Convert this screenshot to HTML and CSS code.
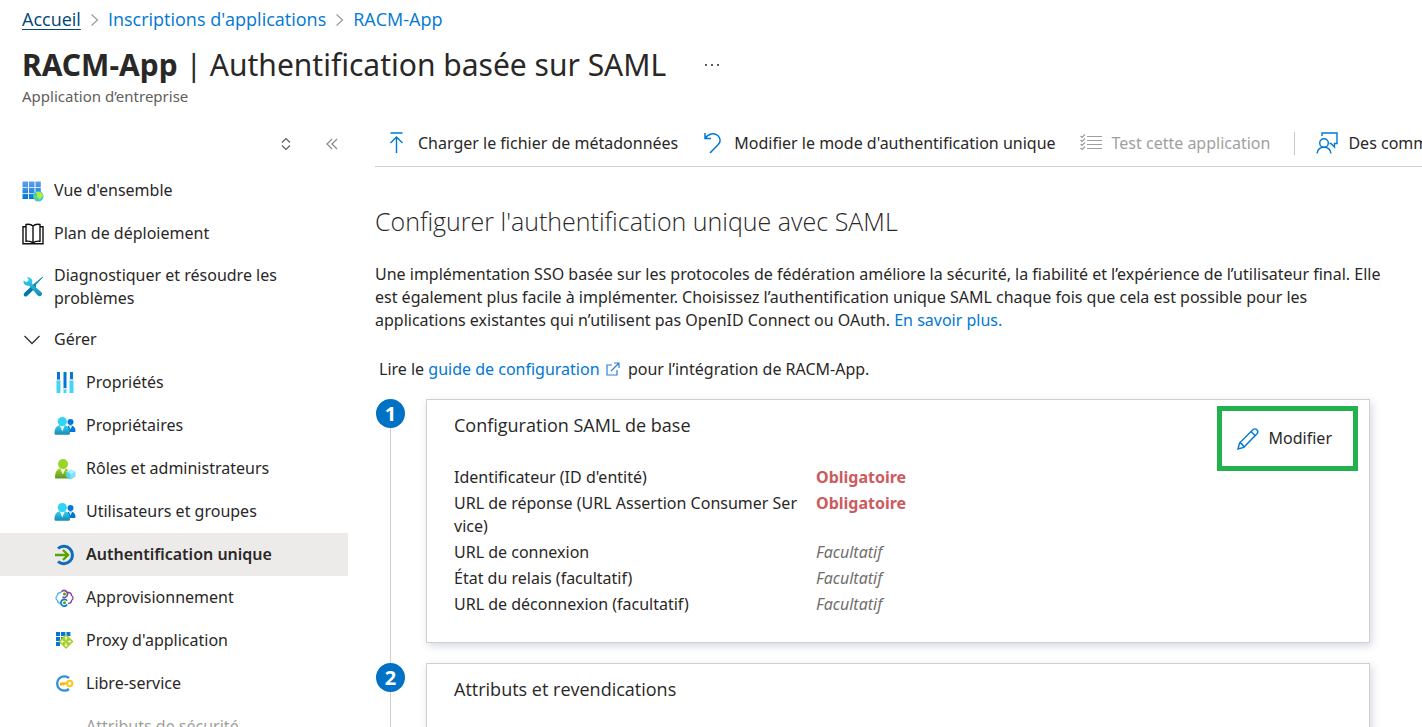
FILE: index.html
```html
<!DOCTYPE html>
<html lang="fr">
<head>
  <meta charset="UTF-8" />
  <meta name="viewport" content="width=device-width, initial-scale=1.0"/>
  <title>RACM-App | Authentification basée sur SAML</title>
  <link rel="stylesheet" href="styles.css">
</head>
<body>

  <!-- Shared gradients and the group icon -->
  <svg class="defs" aria-hidden="true">
    <defs>
      <linearGradient id="blue" x1="0" y1="0" x2="0" y2="1"><stop offset="0" stop-color="#5ea0ef"/><stop offset="1" stop-color="#0078d4"/></linearGradient>
      <linearGradient id="cyan" x1="0" y1="0" x2="0" y2="1"><stop offset="0" stop-color="#32d4f5"/><stop offset="1" stop-color="#198ab3"/></linearGradient>
      <linearGradient id="green" x1="0" y1="0" x2="0" y2="1"><stop offset="0" stop-color="#a4dc28"/><stop offset="1" stop-color="#5e9624"/></linearGradient>
      <symbol id="people" viewBox="0 0 22 22">
        <circle cx="16.5" cy="7" r="3" fill="#0078d4"/>
        <path d="M12 17c0-4 1-6.500 4.500-6.500 3.500 0 5 2.500 5 5.500 0 .6-.4 1-1 1z" fill="#0078d4"/>
        <path d="M14.800 10.800h3.400l-1.700 3.700z" fill="#d5ecfb"/>
        <path d="M.500 17.500C.700 12.500 3 10 8.200 10s7.500 2.500 7.800 8.500c0 .8-.5 1.200-1.200 1.200H1.500c-.8 0-1.100-.7-1-2.200z" fill="url(#cyan)"/>
        <path d="M5.800 10.500h5l-2.500 6z" fill="#e2f8fd"/>
        <circle cx="8.300" cy="6.500" r="4.600" fill="#32d4f5"/>
      </symbol>
    </defs>
  </svg>

  <!-- Header -->
  <header class="header">
    <nav class="breadcrumb" aria-label="Fil d'Ariane">
      <a class="current" href="#">Accueil</a>
      <svg width="9" height="14" viewBox="0 0 9 14"><path d="M1.500 1.500 7.500 7l-6 5.500" fill="none" stroke="#a19f9d" stroke-width="1.300"/></svg>
      <a href="#">Inscriptions d'applications</a>
      <svg width="9" height="14" viewBox="0 0 9 14"><path d="M1.500 1.500 7.500 7l-6 5.500" fill="none" stroke="#a19f9d" stroke-width="1.300"/></svg>
      <a href="#">RACM-App</a>
    </nav>
    <div class="title-row">
      <h1><strong>RACM-App</strong> | Authentification basée sur SAML</h1>
      <button class="more" aria-label="Plus"><svg width="16" height="4" viewBox="0 0 16 4"><path d="M1 1h2v2H1zM7 1h2v2H7zM13 1h2v2h-2z" fill="#605e5c"/></svg></button>
    </div>
    <p class="subtitle">Application d’entreprise</p>
  </header>

  <div class="layout">

    <!-- Sidebar -->
    <aside class="sidebar">
      <div class="sidebar-tools">
        <button aria-label="Tout développer"><svg width="10" height="14" viewBox="0 0 10 14"><path d="M1 5.500 5 1.500l4 4M1 8.500l4 4 4-4" fill="none" stroke="#605e5c" stroke-width="1.200"/></svg></button>
        <button aria-label="Réduire"><svg width="12" height="12" viewBox="0 0 12 12"><path d="M6 1 1 6l5 5M11 1 6 6l5 5" fill="none" stroke="#8a8886" stroke-width="1.200"/></svg></button>
      </div>
      <ul class="menu">
        <li><a href="#">
          <svg class="icon" viewBox="0 0 22 22">
            <path d="M.500 1.500h5.500V7H.500zM7 1.500h5.500V7H7zM13.500 1.500h5.300V7h-5.300zM.500 7.700h5.500v5.300H.500zM7 7.700h5.500v5.300H7zM13.500 7.700h5.300v5.300h-5.300zM.500 13.700h5.500V19H.500zM7 13.700h5.500V19H7z" fill="url(#blue)"/>
            <circle cx="16.300" cy="16.300" r="5.200" fill="#32c8ea"/>
            <path d="M14 12.200c3-1.500 6.800.5 7.100 3.600-.3 1.800-2 1.300-2.400 2.500-.5 1.500-1.700 1.700-2 .3-.3-1-1.800-.8-2-2.200-.2-1 .8-1.400.3-2.200-.4-.6-1-.8-1-2z" fill="#b4ec36"/>
            <path d="M12.500 13.500c.3 3.500 1.500 5.500 4.500 7.500-3.700 0-6.500-4-4.500-7.500z" fill="#86d633"/>
          </svg>
          Vue d'ensemble</a></li>
        <li><a href="#">
          <svg class="icon" viewBox="0 0 22 22" fill="none" stroke="#111" stroke-width="1.400">
            <path d="M11 20V3C9.500 1.500 6.500 1 4 1.500v16.700c2.500-.3 5.500.2 7 1.800 1.500-1.600 4.500-2.100 7-1.800V1.500C15.500 1 12.500 1.500 11 3"/>
            <path d="M4 3.800H1v17h20v-17h-3" />
          </svg>
          Plan de déploiement</a></li>
        <li class="two-lines"><a href="#">
          <svg class="icon" viewBox="0 0 22 22">
            <path d="M20.800 1 12.500 10l-1.300-1.300z" fill="#198ab3" stroke="#198ab3" stroke-width=".8"/>
            <path d="m12 10.500-8.300 8" stroke="#0078a8" stroke-width="4" stroke-linecap="round"/>
            <path d="M7.500 1.500 4.800 1.200l2 2.800-2.300 2.300L1.500 4.500c-.6 3.500 2.500 6 5.500 5l8.500 9.700c2 2.500 6 0 4.200-2.700L10 7.800c1-3-.2-5.500-2.500-6.300z" fill="url(#cyan)"/>
          </svg>
          <span>Diagnostiquer et résoudre les problèmes</span></a></li>
        <li>
          <button class="group" aria-expanded="true">
            <svg class="icon" viewBox="0 0 22 22"><path d="m2.500 7 7.500 7.500L17.500 7" fill="none" stroke="#323130" stroke-width="1.300"/></svg>
            Gérer</button>
          <ul class="submenu">
            <li><a href="#">
              <svg class="icon" viewBox="0 0 22 22">
                <path d="M3 0h3v9H3zM9.500 0h3v16h-3zM16 0h3v8h-3z" fill="#0078d4"/>
                <path d="M2.500 9h4v12h-4zM9.500 18h3v3h-3zM15.500 8.500h4V21h-4z" fill="#42d5f5"/>
                <path d="M2.500 7.500h4V9h-4zM9 16.500h4V18H9zM15.500 7h4v1.500h-4z" fill="#c9d2da"/>
              </svg>
              Propriétés</a></li>
            <li><a href="#"><svg class="icon"><use href="#people"/></svg> Propriétaires</a></li>
            <li><a href="#">
              <svg class="icon" viewBox="0 0 22 22">
                <path d="M1 19C1.200 13 3.500 10 8.800 10c4.800 0 7 3 7.500 9 0 1-.5 1.500-1.200 1.500H2.200C1.400 20.500 1 20 1 19z" fill="url(#green)"/>
                <path d="M6.200 10.500h5.400l-2.700 6z" fill="#f3fbe3"/>
                <circle cx="9" cy="6" r="5" fill="#9bd426"/>
                <path d="m16.800 11.300 4.700 2.200-4.700 2.500-4.700-2.500z" fill="#a8effc"/>
                <path d="m12.100 13.500 4.700 2.500v5.500l-4.700-2.700z" fill="#50d8f2"/>
                <path d="m21.500 13.500-4.700 2.500v5.500l4.700-2.700z" fill="#7be3f7"/>
              </svg>
              Rôles et administrateurs</a></li>
            <li><a href="#"><svg class="icon"><use href="#people"/></svg> Utilisateurs et groupes</a></li>
            <li><a class="selected" href="#" aria-current="page">
              <svg class="icon" viewBox="0 0 22 22" fill="none">
                <path d="M4 4.500A8.700 8.700 0 1 1 4 17.500" stroke="#0f6cbd" stroke-width="3"/>
                <path d="M1 11h12.500M9 6l5 5-5 5" stroke="#57a300" stroke-width="2.400"/>
              </svg>
              Authentification unique</a></li>
            <li><a href="#">
              <svg class="icon" viewBox="0 0 22 22" fill="none" stroke-width="1.300">
                <path d="M7.500 5.500H6A3 3 0 0 0 3.500 8.500c-2 1.200-2 3.800 0 5 0 1.700 1.200 2.800 2.800 2.800h.7" stroke="#59b4d9"/>
                <path d="M13.800 5.500H15A3 3 0 0 1 17.500 8.500c2 1.200 2 3.800 0 5 0 1.700-1.200 2.800-2.800 2.800H14" stroke="#804998"/>
                <path d="M7.500 4.800a3.400 3.400 0 1 1 1 5.200" stroke="#804998" stroke-width="1.600"/>
                <path d="M13 13.700a3.400 3.400 0 1 0 .2 3.800" stroke="#0078d4" stroke-width="1.600"/>
                <circle cx="10.500" cy="7" r="1.500" fill="#57a300"/>
                <circle cx="10.500" cy="15.700" r="1.500" fill="#57a300"/>
              </svg>
              Approvisionnement</a></li>
            <li><a href="#">
              <svg class="icon" viewBox="0 0 22 22">
                <path d="M2 2h4v4H2zM7 2h4.400v4H7zM12.400 2h4v4h-4zM2 7h4v4H2zM7 7h4.400v4H7zM2 12h4v4H2z" fill="#0078d4"/>
                <path d="m12 4 7.500 7.500L12 19l-7.500-7.500z" fill="#a5ce2a"/>
                <path d="M12 7v9M7.500 11.500h9" stroke="#f4fadd" stroke-width="1"/>
                <circle cx="12" cy="11.500" r="1.600" fill="#a5ce2a"/>
                <path d="m12 6-1.800 2.300h3.600zM12 17l-1.800-2.300h3.600zM6.500 11.500l2.300-1.800v3.600zM17.500 11.500l-2.300-1.800v3.600z" fill="#f4fadd"/>
              </svg>
              Proxy d'application</a></li>
            <li><a href="#">
              <svg class="icon" viewBox="0 0 22 22" fill="none">
                <path d="M15 5A7.200 7.200 0 1 0 15 16" stroke="#2f8fd8" stroke-width="2.300"/>
                <path d="M14 10.500H6M7 10.500v2M9.500 10.500v2" stroke="#f8b400" stroke-width="2"/>
                <circle cx="15.700" cy="10.500" r="2.700" stroke="#fcc61a" stroke-width="2"/>
              </svg>
              Libre-service</a></li>
            <li><a class="disabled" href="#"><span class="icon"></span> Attributs de sécurité</a></li>
          </ul>
        </li>
      </ul>
    </aside>

    <!-- Main content -->
    <main class="main">
      <div class="toolbar">
        <button>
          <svg class="icon" viewBox="0 0 22 22" fill="none" stroke="#0078d4" stroke-width="1.400"><path d="M4.500 1h12M10.500 21V5M4.500 11l6-6 6 6"/></svg>
          Charger le fichier de métadonnées</button>
        <button>
          <svg class="icon" viewBox="0 0 22 22" fill="none" stroke="#0078d4" stroke-width="1.500"><path d="M3 1v5.500h6M3.200 6.300C6 1.500 12 .3 15.800 3.500c3 2.700 3 6.500.5 9L8 21"/></svg>
          Modifier le mode d'authentification unique</button>
        <button disabled>
          <svg class="icon" viewBox="0 0 22 22" fill="none" stroke="#a19f9d" stroke-width="1.200"><path d="M7 4.500h15M7 8.500h15M7 12.500h15M7 16.500h15M.500 4 2 5.500l3-3M.500 8 2 9.500l3-3M.500 12 2 13.500l3-3M.500 16 2 17.500l3-3"/></svg>
          Test cette application</button>
        <button class="feedback">
          <svg class="icon" viewBox="0 0 22 22" fill="none" stroke="#0078d4" stroke-width="1.400"><circle cx="8" cy="11" r="4.300"/><path d="M1 21.500c.5-4 3.500-6.200 7-6.200s6.500 2.200 7 6.200M6 4V1h15v10.500h-2.500V15L15 11.500h-1.500"/></svg>
          Des commentaires ?</button>
      </div>

      <div class="content">
        <h2>Configurer l'authentification unique avec SAML</h2>
        <p class="intro">Une implémentation SSO basée sur les protocoles de fédération améliore la sécurité, la fiabilité et l’expérience de l’utilisateur final. Elle est également plus facile à implémenter. Choisissez l’authentification unique SAML chaque fois que cela est possible pour les applications existantes qui n’utilisent pas OpenID Connect ou OAuth. <a href="#">En savoir plus.</a></p>
        <p class="guide">Lire le <a href="#">guide de configuration <svg width="14" height="14" viewBox="0 0 14 14" fill="none" stroke="#2f7fd8" stroke-width="1.200"><path d="M6 3H1v10h10V8M8 1h5v5M13 1 5 9"/></svg></a> pour l’intégration de RACM-App.</p>

        <ol class="steps">
          <li class="step">
            <div class="rail"><span class="number">1</span></div>
            <section class="card">
              <div class="card-header">
                <h3>Configuration SAML de base</h3>
                <button class="edit">
                  <svg class="icon" viewBox="0 0 22 22" fill="none" stroke="#0078d4" stroke-width="1.400"><path d="m1 21 1.500-6L15.800 1.800c3-2.500 6.500 1.200 4.200 4L6.800 19.300zM14 3.500l4.500 4.500M2.500 15c2 .3 3.800 2 4.300 4.300"/></svg>
                  Modifier</button>
              </div>
              <dl class="fields">
                <dt>Identificateur (ID d'entité)</dt><dd class="required">Obligatoire</dd>
                <dt>URL de réponse (URL Assertion Consumer Service)</dt><dd class="required">Obligatoire</dd>
                <dt>URL de connexion</dt><dd>Facultatif</dd>
                <dt>État du relais (facultatif)</dt><dd>Facultatif</dd>
                <dt>URL de déconnexion (facultatif)</dt><dd>Facultatif</dd>
              </dl>
            </section>
          </li>
          <li class="step">
            <div class="rail"><span class="number">2</span></div>
            <section class="card">
              <div class="card-header">
                <h3>Attributs et revendications</h3>
              </div>
            </section>
          </li>
        </ol>
      </div>
    </main>
  </div>

</body>
</html>
```
FILE: styles.css
```css
* {
  box-sizing: border-box;
}

body {
  margin: 0;
  height: 100vh;
  overflow: hidden;
  display: flex;
  flex-direction: column;
  background: #fff;
  color: #292827;
  font-family: 'Segoe UI', 'Noto Sans', sans-serif;
  font-size: 16px;
  line-height: 23px;
}

h1, h2, h3, p, ul, ol, dl, dd {
  margin: 0;
  padding: 0;
}

ul, ol {
  list-style: none;
}

a {
  color: #0078d4;
  text-decoration: none;
}

button {
  display: flex;
  align-items: center;
  padding: 0;
  border: none;
  background: none;
  color: inherit;
  font: inherit;
  white-space: nowrap;
  cursor: pointer;
}

.defs {
  position: absolute;
  width: 0;
  height: 0;
}

.icon {
  flex: none;
  width: 22px;
  height: 22px;
}

/* Header */
.header {
  padding: 8px 22px 0;
}

.breadcrumb {
  display: flex;
  align-items: center;
  gap: 9px;
  font-family: 'Segoe UI', 'Open Sans', sans-serif;
  font-size: 18px;
}

.breadcrumb .current {
  color: #004578;
  text-decoration: underline;
  text-underline-offset: 3px;
}

.title-row {
  display: flex;
  align-items: center;
  gap: 38px;
  margin-top: 12px;
}

h1 {
  font-size: 30px;
  line-height: 44px;
  font-weight: 400;
}

h1 strong {
  font-weight: 700;
}

.subtitle {
  color: #605e5c;
  font-size: 15px;
  line-height: 19px;
}

/* Layout */
.layout {
  display: flex;
  flex: 1;
  min-height: 0;
}

.sidebar {
  flex: none;
  width: 348px;
  margin-right: 27px;
  overflow: hidden;
}

.sidebar-tools {
  display: flex;
  justify-content: flex-end;
  align-items: center;
  gap: 35px;
  height: 63px;
  padding: 12px 10px 0 0;
}

.menu a,
.group {
  display: flex;
  align-items: center;
  gap: 10px;
  width: 100%;
  height: 43px;
  padding: 0 22px;
  color: #292827;
}

.menu .two-lines a {
  height: 63px;
}

.submenu a {
  padding-left: 54px;
}

.menu .selected {
  background: #edebe9;
  font-weight: 600;
}

.menu .disabled {
  color: #a19f9d;
}

/* Toolbar */
.main {
  flex: 1;
  min-width: 0;
}

.toolbar {
  display: flex;
  align-items: center;
  gap: 24px;
  height: 61px;
  padding: 14px 0 0 11px;
  border-bottom: 1px solid #d2d0ce;
  overflow: hidden;
}

.toolbar button {
  flex: none;
  gap: 10px;
}

.toolbar button:disabled {
  color: #a19f9d;
}

.toolbar .feedback {
  padding-left: 21px;
  border-left: 1px solid #c8c6c4;
}

/* Content */
.content {
  padding-right: 20px;
}

h2 {
  margin-top: 38px;
  font-family: 'Segoe UI', 'Open Sans', sans-serif;
  font-size: 25px;
  line-height: 32px;
  font-weight: 300;
}

.intro {
  margin-top: 26px;
}

.guide {
  margin: 26px 4px 18px;
}

.guide svg {
  margin: 0 4px -1px 2px;
}

/* Steps */
.steps {
  margin-right: 32px;
}

.step {
  display: flex;
  gap: 21px;
}

.rail {
  display: flex;
  flex-direction: column;
  align-items: center;
  margin-left: 1px;
}

.rail::after {
  content: "";
  flex: 1;
  width: 1px;
  background: #d2d0ce;
}

.number {
  width: 29px;
  height: 29px;
  border-radius: 50%;
  background: #0072c6;
  color: #fff;
  font-size: 20px;
  font-weight: 700;
  line-height: 29px;
  text-align: center;
}

.card {
  flex: 1;
  min-height: 244px;
  margin-bottom: 20px;
  padding: 6px 11px 25px 27px;
  border: 1px solid #d2d0ce;
  box-shadow: 2px 3px 8px rgba(40, 60, 110, 0.2);
}

.card-header {
  display: flex;
  justify-content: space-between;
  align-items: flex-start;
}

h3 {
  padding-top: 8px;
  font-family: 'Segoe UI', 'Open Sans', sans-serif;
  font-size: 18px;
  font-weight: 400;
}

.edit {
  gap: 10px;
  height: 65px;
  padding: 0 21px 0 15px;
  border: 5px solid #22b14c;
}

.fields {
  display: grid;
  grid-template-columns: 350px 1fr;
  gap: 3px 12px;
  margin-top: -5px;
}

.fields dt {
  word-break: break-all;
}

.fields dd {
  color: #706e6c;
  font-style: italic;
}

.fields .required {
  color: #cd5a5e;
  font-style: normal;
  font-weight: 700;
}
```
